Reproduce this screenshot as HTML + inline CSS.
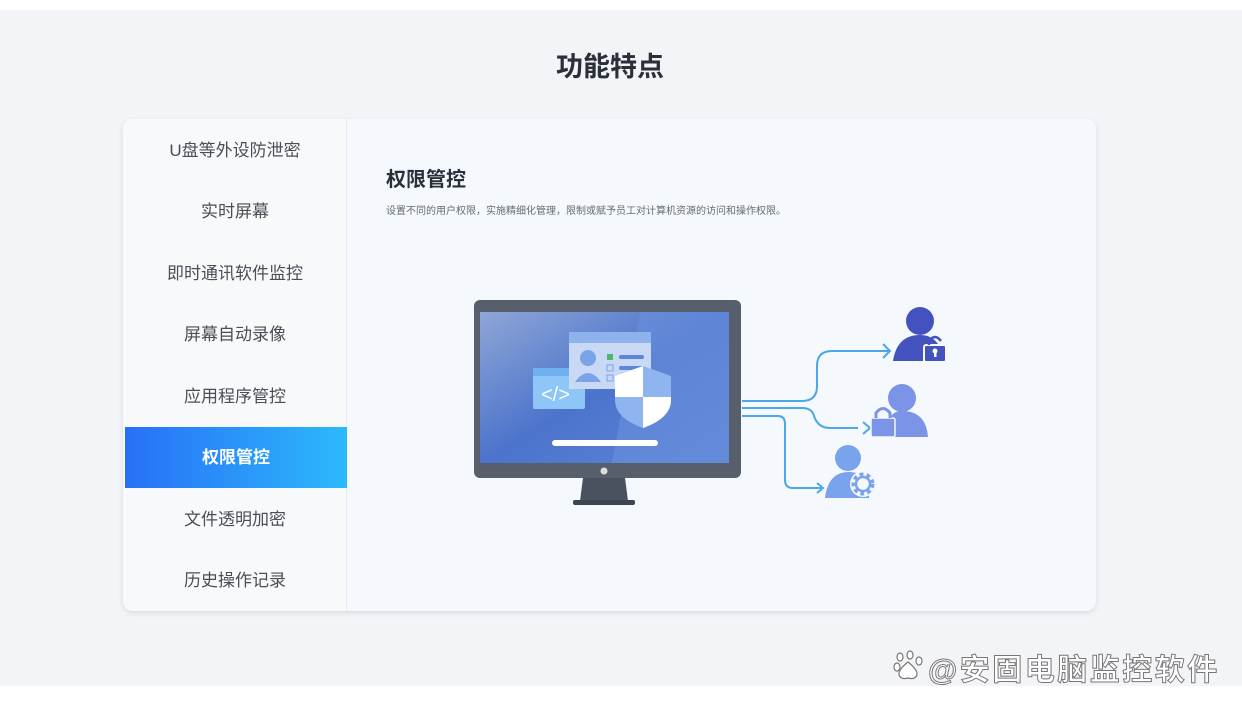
<!DOCTYPE html>
<html><head><meta charset="utf-8"><style>
*{margin:0;padding:0;box-sizing:border-box}
body{width:1242px;height:708px;background:#fff;font-family:"Liberation Sans","Noto Sans CJK SC",sans-serif;position:relative;overflow:hidden}
.bg{position:absolute;left:0;top:10px;width:1242px;height:676px;background:#f2f4f8}
h1{position:absolute;top:45px;left:0;width:1220px;text-align:center;font-size:27px;color:#2b2f3a;font-weight:700}
.card{position:absolute;left:123px;top:119px;width:973px;height:492px;background:#f5f8fc;border-radius:10px;box-shadow:0 2px 6px rgba(0,0,0,.1);overflow:hidden}
.side{position:absolute;left:0;top:0;width:224px;height:492px;background:#f8f9fb;border-right:1px solid #e8ebf0}
.it{position:absolute;left:0;width:224px;height:61px;line-height:61px;text-align:center;font-size:17px;color:#4a4e57}
.act{left:2px;width:222px;background:linear-gradient(90deg,#2870f6,#2cb9fc);color:#fff;font-weight:700}
.t{position:absolute;left:263px;top:44px;font-size:20px;font-weight:700;color:#2b2f3a}
.d{position:absolute;left:263px;top:83px;font-size:10px;color:#666b75}
.wm{position:absolute;left:928px;top:645px;font-size:30px;color:#fff;-webkit-text-stroke:1px #777;font-weight:700;letter-spacing:2.5px}
</style></head><body>
<div class="bg"></div>
<h1>功能特点</h1>
<div class="card">
<div class="side">
<div class="it" style="top:1px">U盘等外设防泄密</div>
<div class="it" style="top:62px">实时屏幕</div>
<div class="it" style="top:124px">即时通讯软件监控</div>
<div class="it" style="top:185px">屏幕自动录像</div>
<div class="it" style="top:247px">应用程序管控</div>
<div class="it act" style="top:308px">权限管控</div>
<div class="it" style="top:370px">文件透明加密</div>
<div class="it" style="top:431px">历史操作记录</div>
</div>
<div class="t">权限管控</div>
<div class="d">设置不同的用户权限，实施精细化管理，限制或赋予员工对计算机资源的访问和操作权限。</div>
</div>
<svg style="position:absolute;left:0;top:0" width="1242" height="708">
<defs><linearGradient id="g" x1="0" y1="0" x2="1" y2="1"><stop offset="0" stop-color="#8fa6d6"/><stop offset=".5" stop-color="#4c74cc"/><stop offset="1" stop-color="#5b84d8"/></linearGradient></defs>
<rect x="474" y="300" width="267" height="178" rx="6" fill="#575f6c"/>
<rect x="480" y="312" width="249" height="151" fill="url(#g)"/>
<polygon points="640,312 729,312 729,463 612,463" fill="#6a90dc" opacity=".6"/>
<circle cx="604" cy="471" r="3.5" fill="#ddd"/>
<polygon points="583,478 625,478 628,501 580,501" fill="#4a5260"/>
<rect x="573" y="500" width="62" height="5" rx="2" fill="#3e4552"/>
<rect x="533" y="368" width="52" height="41" rx="2" fill="#8ec6f7"/>
<rect x="533" y="368" width="52" height="8" fill="#6fb0f0"/>
<text x="541" y="401" font-size="20" fill="#fff" font-family="Liberation Sans">&lt;/&gt;</text>
<rect x="569" y="332" width="82" height="57" fill="#c9d8f4"/>
<rect x="569" y="332" width="82" height="11" fill="#8eb3ec"/>
<circle cx="588" cy="358" r="8" fill="#7aa3e8"/>
<path d="M575 382 q13 -18 26 0z" fill="#7aa3e8"/>
<rect x="607" y="354" width="6" height="6" fill="#4cb86c"/>
<rect x="607" y="365" width="6" height="6" fill="none" stroke="#7aa3e8"/>
<rect x="607" y="375" width="6" height="6" fill="none" stroke="#7aa3e8"/>
<rect x="619" y="355" width="25" height="4" rx="2" fill="#5d86d8"/>
<rect x="619" y="366" width="25" height="4" rx="2" fill="#5d86d8"/>
<path d="M643 366 l28 10 v24 q0 18 -28 28 q-28 -10 -28 -28 v-24z" fill="#8fb5f0"/>
<path d="M643 366 v31 h-28 v-21z M643 397 h28 v3 q0 18 -28 28z" fill="#fff"/>
<rect x="552" y="440" width="106" height="6" rx="3" fill="#fff"/>
<g fill="none" stroke="#4aa8e8" stroke-width="2">
<path d="M742 401 h60 q15 0 15 -15 v-20 q0 -15 15 -15 h57"/>
<path d="M742 408 h60 q10 0 12 8 q4 12 16 12 h28"/>
<path d="M742 416 h36 q7 0 7 8 v56 q0 8 8 8 h28"/>
<path d="M883 344 l7 7 l-7 7 M863 422 l7 6 l-7 6 M817 483 l6 5 l-6 5"/>
</g>
<circle cx="920" cy="321" r="14" fill="#4452c0"/>
<path d="M893 361 q4 -26 27 -26 q20 0 24 26z" fill="#4452c0"/>
<rect x="924" y="345" width="22" height="17" rx="2" fill="#4452c0" stroke="#f5f8fc" stroke-width="2"/>
<path d="M929 345 v-4 q6 -8 12 0" fill="none" stroke="#4452c0" stroke-width="2.5"/>
<rect x="934" y="350" width="2.5" height="7" fill="#fff"/><circle cx="935" cy="351" r="2.5" fill="#fff"/>
<circle cx="902" cy="398" r="14" fill="#7b94e8"/>
<path d="M886 437 q0 -26 16 -26 q24 0 26 26z" fill="#7b94e8"/>
<rect x="871" y="418" width="24" height="19" rx="2" fill="#7b94e8" stroke="#f5f8fc" stroke-width="1.5"/>
<path d="M876 418 v-5 q7 -9 14 0 v5" fill="none" stroke="#7b94e8" stroke-width="3"/>
<circle cx="848" cy="458" r="13" fill="#7aa3ee"/>
<path d="M825 498 q3 -26 24 -26 q15 0 20 14 v12z" fill="#7aa3ee"/>
<circle cx="863" cy="484" r="13" fill="#f5f8fc"/>
<circle cx="863" cy="484" r="9" fill="none" stroke="#7aa3ee" stroke-width="5" stroke-dasharray="3.5 3"/>
<circle cx="863" cy="484" r="7" fill="none" stroke="#7aa3ee" stroke-width="2.5"/>
<g fill="#fff" stroke="#777" stroke-width="1.2">
<ellipse cx="900" cy="657" rx="3" ry="4"/><ellipse cx="910" cy="655" rx="3" ry="4"/><ellipse cx="919" cy="661" rx="3" ry="4"/><ellipse cx="897" cy="667" rx="3" ry="4"/>
<path d="M908 662 q-10 8 -9 13 q2 5 9 3 q7 2 9 -3 q1 -5 -9 -13z"/>
</g>
</svg>
<div class="wm">@安固电脑监控软件</div>
</body></html>
